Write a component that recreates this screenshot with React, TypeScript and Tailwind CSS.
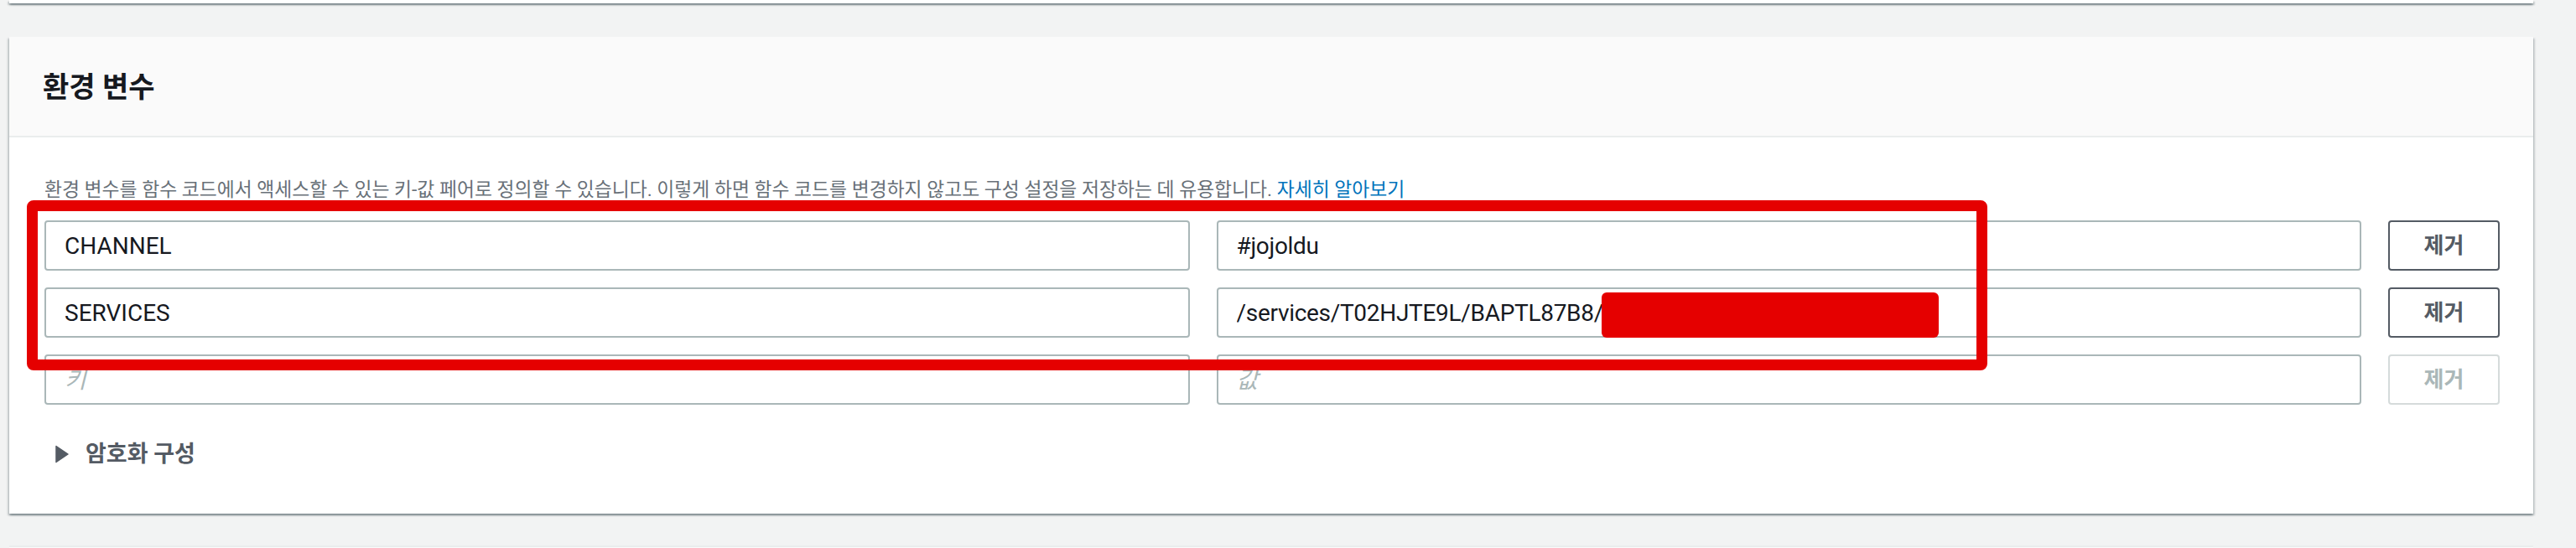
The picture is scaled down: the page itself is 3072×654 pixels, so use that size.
import React from "react";

const rows = [
  { k: "CHANNEL", v: "#jojoldu", enabled: true },
  { k: "SERVICES", v: "/services/T02HJTE9L/BAPTL87B8/", enabled: true },
  { k: "", v: "", enabled: false },
];

export default function App() {
  return (
    <div className="relative w-full h-[654px] overflow-hidden bg-[#f2f3f3] pl-[11px] pr-[51px] font-['Roboto','Noto_Sans_CJK_KR',sans-serif]">
      <div className="h-[4px] bg-white shadow-[0_2px_2px_0_rgba(0,28,36,0.3),2px_2px_2px_0_rgba(0,28,36,0.15),-2px_2px_2px_0_rgba(0,28,36,0.15)]" />
      <div className="mt-[40px] bg-white shadow-[0_2px_2px_0_rgba(0,28,36,0.3),2px_2px_2px_0_rgba(0,28,36,0.15),-2px_2px_2px_0_rgba(0,28,36,0.15)]">
        <div className="h-[120px] bg-[#fafafa] border-b-2 border-[#eaeded] pl-[40px] flex items-center">
          <h2 className="text-[34px] font-bold text-[#16191f] leading-none mt-[2px]">환경 변수</h2>
        </div>
        <div className="pl-[42px] pr-[40px] pt-[48px] pb-[53px]">
          <p className="text-[22.8px] leading-[30px] text-[#687078] whitespace-nowrap">
            환경 변수를 함수 코드에서 액세스할 수 있는 키-값 페어로 정의할 수 있습니다. 이렇게 하면 함수 코드를 변경하지 않고도 구성 설정을 저장하는 데 유용합니다.{" "}
            <a className="text-[#0073bb]">자세히 알아보기</a>
          </p>
          <div className="mt-[21px] flex flex-col gap-[20px]">
            {rows.map((r, i) => (
              <div key={i} className="flex gap-[32px]">
                <input
                  readOnly
                  defaultValue={r.k}
                  placeholder="키"
                  className="flex-1 min-w-0 h-[60px] border-2 border-[#aab7b8] rounded-[4px] pl-[22px] text-[28px] text-[#16191f] outline-none placeholder:italic placeholder:text-[#aab7b8]"
                />
                <input
                  readOnly
                  defaultValue={r.v}
                  placeholder="값"
                  className="flex-1 min-w-0 h-[60px] border-2 border-[#aab7b8] rounded-[4px] pl-[22px] text-[28px] tracking-[-0.3px] text-[#16191f] outline-none placeholder:italic placeholder:text-[#aab7b8]"
                />
                {r.enabled ? (
                  <button className="w-[133px] h-[60px] border-2 border-[#545b64] rounded-[4px] text-[26px] font-bold text-[#545b64] flex items-center justify-center">
                    제거
                  </button>
                ) : (
                  <button className="w-[133px] h-[60px] border-2 border-[#d5dbdb] rounded-[4px] text-[26px] font-bold text-[#aab7b8] flex items-center justify-center">
                    제거
                  </button>
                )}
              </div>
            ))}
          </div>
          <div className="mt-[41px] h-[36px] flex items-center">
            <svg width="16" height="22" viewBox="0 0 16 22" className="ml-[13px]">
              <path d="M1 1.5 L15 11 L1 20.5 Z" fill="#545b64" stroke="#545b64" strokeWidth="1.5" strokeLinejoin="round" />
            </svg>
            <span className="ml-[20px] text-[27px] font-bold text-[#545b64]">암호화 구성</span>
          </div>
        </div>
      </div>
      <div className="mt-[38px] h-[40px] bg-[#fafafa] border-t-2 border-[#eaeded]" />

      <div className="absolute left-[32px] top-[239px] w-[2338px] h-[203px] border-[13px] border-[#e50000] rounded-[8px] pointer-events-none" />
      <div className="absolute left-[1910px] top-[349px] w-[402px] h-[54px] bg-[#e50000] rounded-[6px] pointer-events-none" />
    </div>
  );
}
